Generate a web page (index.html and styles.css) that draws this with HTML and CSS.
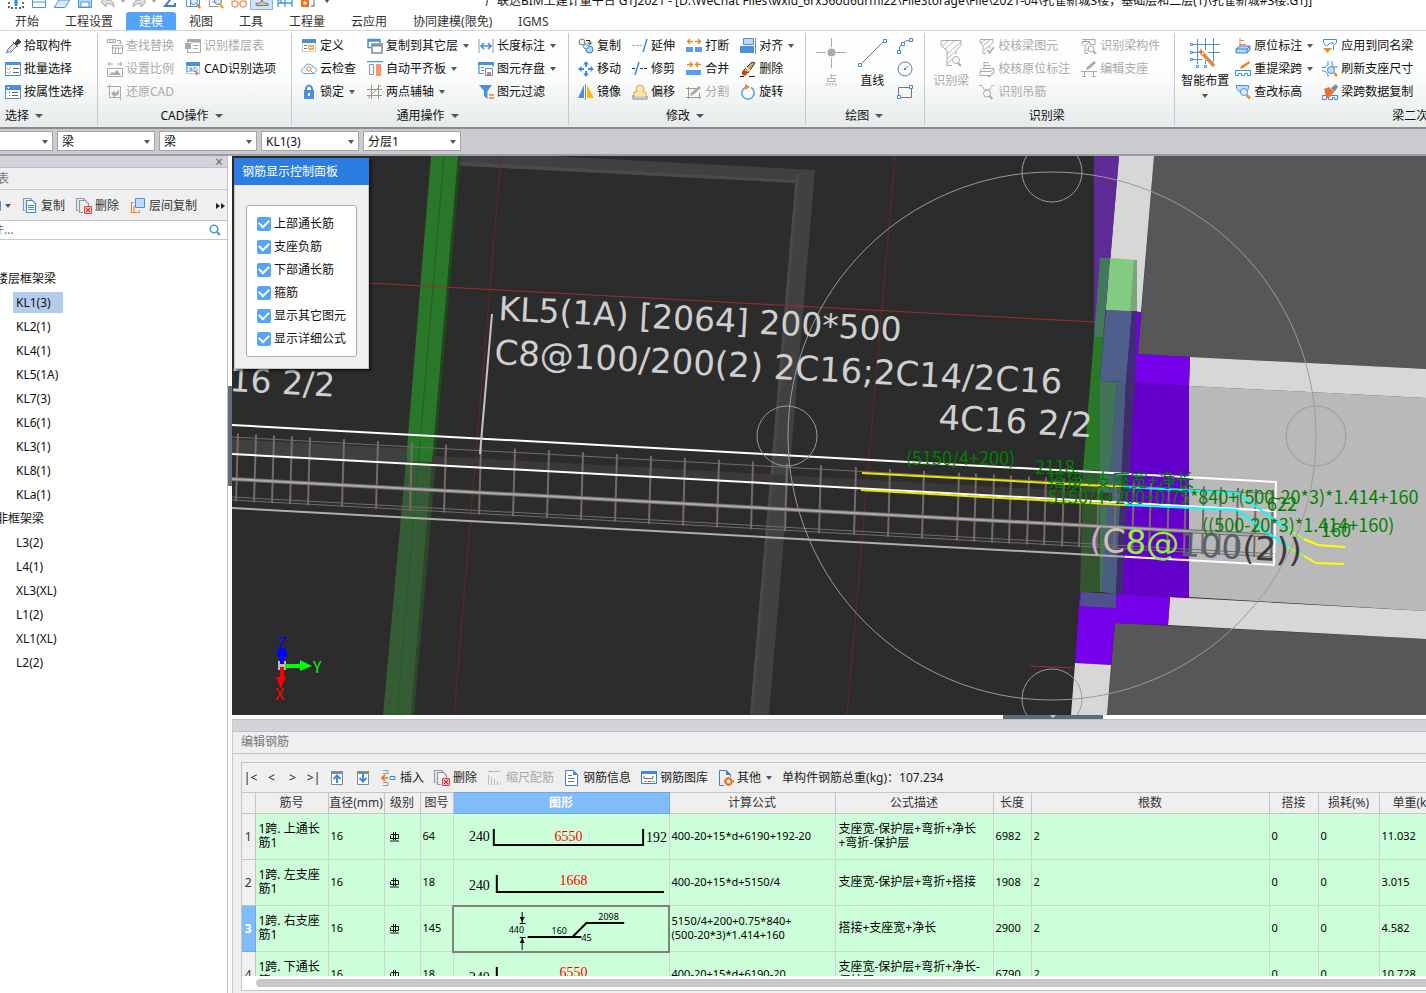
FILE: index.html
```html
<!DOCTYPE html>
<html lang="zh-CN">
<head>
<meta charset="utf-8">
<title>广联达BIM土建计量平台 GTJ2021</title>
<link rel="stylesheet" href="styles.css">
</head>
<body>
<svg class="sprite" aria-hidden="true">
  <defs>
    <symbol id="i-dropper" viewBox="0 0 16 16"><path d="M2 14l1-3 6-6 3 3-6 6z" fill="#dfe5ea" stroke="#6b7a88"/><path d="M8 4l5 5M10 5l3-4 3 3-4 3z" fill="#444" stroke="#444"/><path d="M1 15l2-1" stroke="#4a90e2"/></symbol>
    <symbol id="i-batch" viewBox="0 0 16 16"><path d="M.5 1.500h15v13h-15z" fill="#fff" stroke="#4a90dd"/><path d="M0 1h16v3H0z" fill="#4a90dd"/><path d="M2 7l1.500 1.500L6 6M2 11l1.500 1.500L6 10" fill="none" stroke="#f0903a"/><path d="M8 7.500h6M8 11.500h6" stroke="#666"/></symbol>
    <symbol id="i-attr" viewBox="0 0 16 16"><path d="M.5 1.500h15v13h-15z" fill="#fff" stroke="#4a90dd"/><path d="M0 1h16v5H0z" fill="#4a90dd"/><path d="M2 3h3L3.500 5z" fill="#fff"/><path d="M4 8.500h1M4 11.500h1M7 8.500h6M7 11.500h6" stroke="#666"/></symbol>
    <symbol id="i-find" viewBox="0 0 16 16"><path d="M.5 1.500h8v3h-8zM3 1.500v3M6 1.500v3M5.500 7.500h10v8h-10zM5.500 10h10M8.500 10v5M11.500 10v5" fill="none" stroke="#aaa"/><path d="M10 2.500h3.500V6M12 4.500L13.500 6 15 4.500" fill="none" stroke="#aaa"/></symbol>
    <symbol id="i-scale" viewBox="0 0 16 16"><path d="M1 3h5M10 3h5M3 1L1 3l2 2M13 1l2 2-2 2M.5 7.500h15v8H.500z" fill="none" stroke="#aaa"/><path d="M2 14l3-3 2 1 3-3 4 5z" fill="#aaa"/></symbol>
    <symbol id="i-restore" viewBox="0 0 16 16"><path d="M2.500.5v13M0 2.500h13.500v11H2.500M13.500 13.500V16" fill="none" stroke="#aaa"/><path d="M4 9l4-2v2q3-1 3-4 3 6-3 7v2z" fill="#aaa"/></symbol>
    <symbol id="i-floor" viewBox="0 0 16 16"><path d="M2.500 1.500h13v13h-13zM6 4h9" fill="none" stroke="#aaa"/><path d="M0 5h6v6H0zM3 1h12v3H3z" fill="#aaa"/><path d="M8 7.500h5M8 10.500h5" stroke="#aaa"/></symbol>
    <symbol id="i-cad" viewBox="0 0 16 16"><path d="M1.500 1.500h13v11h-13z" fill="#fff" stroke="#a9c9ee"/><path d="M1 1h14v4H1z" fill="#4a90dd"/><path d="M3.500 6.500H2v4h1.500M5 11V8l1-1.500L7 8v3M5 9h2M9 6.500v4h2l1-1V7.500l-1-1z" fill="none" stroke="#5a9ae2"/><path d="M10 9l5 4-2.500.2L11 15z" fill="#f07848"/></symbol>
    <symbol id="i-define" viewBox="0 0 16 16"><path d="M1.500 1.500h13v12h-13z" fill="#fff" stroke="#c7ccd2"/><path d="M1 1h14v4H1z" fill="#4a90dd"/><path d="M3 7.500h3M3 10.500h3" stroke="#777"/><path d="M7 7h6v5H7z" fill="#f5b04f"/><path d="M8 9.500h4" stroke="#fff"/></symbol>
    <symbol id="i-cloud" viewBox="0 0 16 16"><path d="M4 12.500C-1 12.500 0 7 3.500 7 4 2 11 2 11.500 6c5-.5 5 6.500.5 6.500z" fill="#fff" stroke="#58a0e8"/><circle cx="8" cy="8" r="2.300" fill="none" stroke="#f08030"/><path d="M9.700 9.700L12 12" stroke="#f08030"/></symbol>
    <symbol id="i-lock" viewBox="0 0 16 16"><path d="M5 7V4q3-5 6 0v3" fill="none" stroke="#4a90dd" stroke-width="2"/><path d="M3 6h10v9H3z" fill="#4a90dd"/><path d="M8 9v3" stroke="#fff" stroke-width="2"/></symbol>
    <symbol id="i-copyto" viewBox="0 0 16 16"><path d="M4 9.500H1V1.500h12V5M1 3h12" fill="none" stroke="#4a90dd" stroke-width="1.500"/><path d="M5 6h10v9H5z" fill="#fff" stroke="#7d8b97" stroke-width="1.500"/><path d="M5 7.500h10" stroke="#7d8b97" stroke-width="2"/></symbol>
    <symbol id="i-align" viewBox="0 0 16 16"><path d="M0 .5h16" stroke="#4a90dd" stroke-width="1.500"/><path d="M2.500 3.500h4v10h-4z" fill="#fff" stroke="#8d98a2"/><path d="M9 3h5v12H9z" fill="#ff9468"/></symbol>
    <symbol id="i-axis" viewBox="0 0 16 16"><path d="M4.500 1v14M11.500 1v14M0 5.500h15M0 11.500h15" stroke="#8d98a2"/><path d="M1 14L14 1" stroke="#f08030"/></symbol>
    <symbol id="i-length" viewBox="0 0 16 16"><path d="M1 1v14M15 1v14" stroke="#8d98a2"/><path d="M3 8h10M6 5L3 8l3 3M10 5l3 3-3 3" fill="none" stroke="#3f8ae0" stroke-width="1.500"/></symbol>
    <symbol id="i-save" viewBox="0 0 16 16"><path d="M6 12.500H1V2h14v4" fill="none" stroke="#4a90dd" stroke-width="1.200"/><path d="M0 1h16v3H0z" fill="#4a90dd"/><path d="M3 6.500h3M3 9.500h3" stroke="#888"/><path d="M7.500 7.500h7v7h-7z" fill="#fff" stroke="#4a90dd"/><path d="M9 11h4v3H9z" fill="#f08030"/></symbol>
    <symbol id="i-filter" viewBox="0 0 16 16"><path d="M1 1h13L9.500 7v8L6 12V7z" fill="#4a90dd"/><path d="M11 11h5M11 14h5" stroke="#f08030" stroke-width="1.500"/></symbol>
    <symbol id="i-copy2" viewBox="0 0 16 16"><circle cx="4" cy="4" r="3" fill="#eee" stroke="#777"/><path d="M8 2.500h4V6M10 4.500l2 2 2-2" fill="none" stroke="#222"/><circle cx="11.500" cy="11.500" r="3.500" fill="#a9dcf5" stroke="#2878b8"/><circle cx="8" cy="8.500" r="2.500" fill="#cdeafa" stroke="#4a90c0"/></symbol>
    <symbol id="i-move" viewBox="0 0 16 16"><path d="M8 0l3 3.500H5zM8 16l3-3.500H5zM0 8l3.500-3v6zM16 8l-3.500-3v6z" fill="#3f8ae0"/><path d="M8 3v3M8 10v3M3 8h3M10 8h3" stroke="#3f8ae0" stroke-width="2"/></symbol>
    <symbol id="i-mirror" viewBox="0 0 16 16"><path d="M6 1v13H0z" fill="#4a90dd"/><path d="M9 1v13h7z" fill="#ffb417"/><path d="M7.500 0v16" stroke="#888"/></symbol>
    <symbol id="i-extend" viewBox="0 0 16 16"><path d="M0 7.500h10" stroke="#aaa" stroke-dasharray="3 1"/><path d="M15 1l-4 13" stroke="#3f8ae0" stroke-width="1.500"/></symbol>
    <symbol id="i-trim" viewBox="0 0 16 16"><path d="M0 7.500h4M8 7.500h8" stroke="#333" stroke-dasharray="3 1"/><path d="M7 1L3 14" stroke="#3f8ae0" stroke-width="1.500"/></symbol>
    <symbol id="i-offset" viewBox="0 0 16 16"><path d="M5 8q-3-6 3-7 6 1 3 7h3v5H2V8z" fill="#ffe6b0" stroke="#f0a030"/><path d="M1 11v4h14v-3" fill="none" stroke="#3f8ae0"/></symbol>
    <symbol id="i-break" viewBox="0 0 16 16"><path d="M0 9h7v5H0zM9 9h7v5H9z" fill="#5a9df0"/><path d="M7 3.500H2M9 3.500h5M4 1L1.500 3.500 4 6M12 1l2.500 2.500L12 6" fill="none" stroke="#e58a1c" stroke-width="1.300"/></symbol>
    <symbol id="i-merge" viewBox="0 0 16 16"><path d="M0 9h15v5H0z" fill="#5a9df0"/><path d="M1 3.500h5M15 3.500h-5M4 1l2.500 2.500L4 6M12 1L9.500 3.500 12 6" fill="none" stroke="#e58a1c" stroke-width="1.300"/></symbol>
    <symbol id="i-split" viewBox="0 0 16 16"><path d="M0 4.500h12M0 13.500h15M2.500 3v12M13.500 9v6" stroke="#999"/><path d="M4 12l1-3 8-7 2 2-8 7z" fill="#aaa"/></symbol>
    <symbol id="i-alignr" viewBox="0 0 16 16"><path d="M3.500.5h10v6h-10z" fill="#b8d9fb" stroke="#4a90dd"/><path d="M0 8h14v7H0z" fill="#4a90dd"/><path d="M15.500 0v16" stroke="#888"/></symbol>
    <symbol id="i-erase" viewBox="0 0 16 16"><path d="M3 10l9-9 3 1-7 10z" fill="#d9a25c" stroke="#333"/><path d="M6 6.500l4 3.500" stroke="#f4e4c0" stroke-width="2"/><circle cx="4.500" cy="12" r="2.600" fill="#d8410e"/><path d="M0 15.500h4M9 15.500h6" stroke="#222"/></symbol>
    <symbol id="i-rotate" viewBox="0 0 16 16"><path d="M11 3.500A6.200 6.200 0 1 1 5 3.500" fill="none" stroke="#58a0e8" stroke-width="1.500"/><path d="M5 0l5 3-5 3z" fill="#f08a20"/></symbol>
    <symbol id="i-point" viewBox="0 0 30 30"><path d="M15.500 0v9M15.500 20v10M0 14.500h10M20 14.500h10" stroke="#aaa"/><circle cx="15.500" cy="14.500" r="4" fill="#aaa"/></symbol>
    <symbol id="i-line" viewBox="0 0 30 30"><path d="M3 27L27 3" stroke="#777"/><path d="M1.500 25.500h3v3h-3zM26.500 1.500h3v3h-3z" fill="#fff" stroke="#3f8ae0"/></symbol>
    <symbol id="i-arc" viewBox="0 0 16 16"><path d="M2 14Q2 3 14 2" fill="none" stroke="#777"/><path d="M.5 12.500h3v3h-3zM4.500 4.500h3v3h-3zM12.500.5h3v3h-3z" fill="#fff" stroke="#3f8ae0"/></symbol>
    <symbol id="i-circle" viewBox="0 0 16 16"><circle cx="8" cy="8" r="7" fill="none" stroke="#777"/><path d="M8 8l3-3" stroke="#3f8ae0"/><path d="M7 7h2v2H7z" fill="#3f8ae0"/></symbol>
    <symbol id="i-rect" viewBox="0 0 16 16"><path d="M1.500 3.500h13v10h-13z" fill="none" stroke="#777"/><path d="M.5 11.500h3v3h-3zM12.500 1.500h3v3h-3z" fill="#fff" stroke="#3f8ae0"/></symbol>
    <symbol id="i-beamid" viewBox="0 0 30 30"><path d="M5 2.500h20v5l-5 5v4M5 2.500v5l6 5v15h5" fill="none" stroke="#aaa"/><path d="M6 8l6-5M9 11l9-8M11 16L25 4M11 21l8-7M11 26l5-5" stroke="#bbb"/><circle cx="20" cy="22" r="3.500" fill="none" stroke="#aaa"/><path d="M22 25l3 3" stroke="#aaa" stroke-width="2"/></symbol>
    <symbol id="i-chk1" viewBox="0 0 16 16"><path d="M1 1.500h13v3l-3 3v3M1 1.500v3l3 3v8h3M2 5l4-3M5 7l6-5M5 12l5-4" fill="none" stroke="#aaa"/><path d="M8 12l2.500 3L15 9" fill="none" stroke="#aaa" stroke-width="1.500"/></symbol>
    <symbol id="i-chk2" viewBox="0 0 16 16"><path d="M5 7V1M5 1.500h5M5 4.500h7M1 9.500l3-2h11l-3 3H1v4h11l3-3v-3" fill="none" stroke="#aaa"/><path d="M8 14l2 2 5-5" fill="none" stroke="#aaa"/></symbol>
    <symbol id="i-hang" viewBox="0 0 16 16"><path d="M0 1.500h3l2 4h6l2-4h3" fill="none" stroke="#aaa" stroke-dasharray="3 1"/><circle cx="8" cy="9.500" r="3.500" fill="none" stroke="#aaa"/><path d="M10.500 12l3 3" stroke="#aaa" stroke-width="2"/></symbol>
    <symbol id="i-comp" viewBox="0 0 16 16"><path d="M1 1.500h13v5H9v-3H1v2l3 3v7h3M2 5l3-3M4 8l5-5M5 13l3-3" fill="none" stroke="#aaa"/><circle cx="10" cy="11" r="3" fill="none" stroke="#aaa"/><path d="M12 13l3 3" stroke="#aaa" stroke-width="2"/></symbol>
    <symbol id="i-editsup" viewBox="0 0 16 16"><path d="M0 10.500h16M3.500 11v4M12.500 11v4M1 15.500h4M11 15.500h4" stroke="#aaa"/><path d="M5 9l1-3 7-6 2 2-7 6z" fill="#aaa"/></symbol>
    <symbol id="i-smart" viewBox="0 0 30 30"><path d="M7.500 1v25M15.500 0v12M23.500 0v24M3 6.500h27M3 14.500h8M18 14.500h12M3 21.500h9M15.500 22v4" stroke="#4a90dd"/><path d="M.5 5.500h2v2h-2zM.5 13.500h2v2h-2zM.5 20.500h2v2h-2zM6.500 27.500h2v2h-2zM14.500 27.500h2v2h-2z" fill="#fff" stroke="#4a90dd"/><path d="M13 16l11 12" stroke="#d98a45" stroke-width="3.500"/><path d="M11 10l1 3 3 1-3 1-1 3-1-3-3-1 3-1z" fill="#f07020"/></symbol>
    <symbol id="i-orig" viewBox="0 0 16 16"><path d="M5 9V0M5 2.500h4M5 6.500h6" stroke="#f08030"/><path d="M1 11l4-3h10v4l-3 3H1z" fill="#b8d6fa" stroke="#3f7fd0"/><path d="M1 11h11l3-3M12 11v4" fill="none" stroke="#3f7fd0"/></symbol>
    <symbol id="i-respan" viewBox="0 0 16 16"><path d="M.5 9.500h15v5h-3v-2h-3v2h-3v-2h-3v2h-3z" fill="none" stroke="#3f8ae0"/><path d="M5 8l1-3 8-5 1 2-7 5z" fill="#f08030"/></symbol>
    <symbol id="i-elev" viewBox="0 0 16 16"><path d="M1.500 1.500h12v3l-2 3H4l-2.500-3z" fill="#c7dcf8" stroke="#4a90dd"/><circle cx="9" cy="8" r="3.500" fill="#e0edfc" stroke="#4a90dd"/><path d="M11.500 11l3.500 3.500" stroke="#f09020" stroke-width="2.500"/></symbol>
    <symbol id="i-apply" viewBox="0 0 16 16"><path d="M4 8L1.500 4.500v-3h13v3L11.500 8v4M5 8l3-3h4" fill="none" stroke="#3f8ae0"/><path d="M1 10h9l-4.500 5z" fill="#f0901c"/></symbol>
    <symbol id="i-refresh" viewBox="0 0 16 16"><path d="M6 0v4L3 6.500H0M10 0v4l2 2h4M0 10h3l3 3v3" fill="none" stroke="#3f8ae0"/><circle cx="9" cy="9" r="3.500" fill="#c7dcf8" stroke="#4a90dd"/><path d="M12 12l3 3" stroke="#f09020" stroke-width="2.500"/></symbol>
    <symbol id="i-spancopy" viewBox="0 0 16 16"><path d="M.5 15.500v-4h15v4h-3v-2h-2v2h-4v-2h-2v2z" fill="none" stroke="#3f8ae0"/><path d="M2 5l5-2 5 5-5 6-3-1z" fill="#f07030"/><path d="M9 4l5-4 2 3-4 5z" fill="#7d8b97"/></symbol>
    <symbol id="i-pages" viewBox="0 0 16 16"><path d="M3 12.500H1.500V.5h7L10 2" fill="none" stroke="#8d98a2" stroke-width="1.200"/><path d="M4.500 2.500h6l3 3v9h-9z" fill="#fff" stroke="#3f8ae0" stroke-width="1.200"/><path d="M6 7.500h6M6 9.500h6M6 11.500h6" stroke="#3f8ae0"/></symbol>
    <symbol id="i-delpage" viewBox="0 0 16 16"><path d="M2 12.500H.500V.5h7L9 2M7 14.500H3.500v-12h6l3 3V8" fill="none" stroke="#8d98a2" stroke-width="1.200"/><path d="M8.500 8.500h7v7h-7z" fill="#f3b0b0" stroke="#d84a4a"/><path d="M10 10l4 4M14 10l-4 4" stroke="#c22"/></symbol>
    <symbol id="i-layers" viewBox="0 0 16 16"><path d="M4 4.500H1.500v10M4 7.500v7M1 14.500h8.500V12" fill="none" stroke="#f08030"/><path d="M5.500.5h9v9h-9z" fill="#c0dbfb" stroke="#4a90dd"/></symbol>
    <symbol id="i-glass" viewBox="0 0 16 16"><circle cx="7" cy="7" r="3.800" fill="none" stroke="#4a9cc8" stroke-width="1.600"/><path d="M10 10l3 3" stroke="#4a9cc8" stroke-width="2.200"/></symbol>
    <symbol id="i-up" viewBox="0 0 16 16"><path d="M2.500 1.500h11v13h-11z" fill="#fff" stroke="#7d8b97"/><path d="M2 1h12v3H2z" fill="#7d8b97"/><path d="M8 13V6M4.500 9L8 5.500 11.500 9" fill="none" stroke="#3f8ae0" stroke-width="2"/></symbol>
    <symbol id="i-down" viewBox="0 0 16 16"><path d="M2.500 1.500h11v13h-11z" fill="#fff" stroke="#7d8b97"/><path d="M2 1h12v3H2z" fill="#7d8b97"/><path d="M8 4v7M4.500 8L8 11.500 11.500 8" fill="none" stroke="#3f8ae0" stroke-width="2"/></symbol>
    <symbol id="i-insert" viewBox="0 0 16 16"><path d="M2 .5h5v3H2M2 12.500h5v3H2" fill="none" stroke="#8d98a2"/><path d="M7 8H2M4 5L1 8l3 3" fill="none" stroke="#f07020" stroke-width="1.600"/><path d="M9 6.500h5v3H9z" fill="none" stroke="#3f8ae0"/></symbol>
    <symbol id="i-ruler" viewBox="0 0 16 16"><path d="M1.500 5v10M4.500 7v8M7.500 9v6M10.500 11v4M13.500 13v2M1 1.500h12M3 .5v2M9 .5l2 1.500" stroke="#bbb" fill="none"/></symbol>
    <symbol id="i-info" viewBox="0 0 16 16"><path d="M1.500.5h8l4 4v11h-12z" fill="#fff" stroke="#3f7fd0"/><path d="M9 1v4h4.500z" fill="#3f7fd0"/><path d="M4 5.500h4M4 8.500h7M4 11.500h6" stroke="#6b7a88"/></symbol>
    <symbol id="i-lib" viewBox="0 0 16 16"><path d="M.5 1.500h15v12H.500z" fill="#fff" stroke="#3f7fd0"/><path d="M0 1h16v3H0z" fill="#3f8ae0"/><path d="M3 8V6M3 8.500h9M12 6v2" stroke="#666"/><path d="M3 11.500h3" stroke="#f08030"/><path d="M7 11.500h3" stroke="#e04a4a"/><path d="M11 11.500h3" stroke="#58b858"/></symbol>
    <symbol id="i-other" viewBox="0 0 16 16"><path d="M6 15.500H1.500V.5h7l4 4V7" fill="none" stroke="#3f7fd0"/><path d="M8 0v5h5z" fill="#3f7fd0"/><circle cx="10.500" cy="11.500" r="3" fill="#fff" stroke="#f07020" stroke-width="2"/><path d="M10.500 7v2M10.500 14v2M6 11.500h2M13 11.500h3" stroke="#f07020" stroke-width="2"/></symbol>
    <symbol id="i-rebar" viewBox="0 0 10 10"><path d="M3.500 0v8M5.500 0v8M1 2.500h7.500v4H.500v-3M0 9h9" fill="none" stroke="#111"/></symbol>
    <symbol id="q-sel" viewBox="0 0 16 16"><path d="M1 15V1h14v14z" fill="none" stroke="#333" stroke-width="1.500" stroke-dasharray="2 2"/><path d="M8 7v6" stroke="#3f8ae0" stroke-width="3"/></symbol>
    <symbol id="q-new" viewBox="0 0 16 16"><path d="M1.500 1v13.500h13V1M1 9h14" fill="none" stroke="#4a90dd"/></symbol>
    <symbol id="q-open" viewBox="0 0 16 16"><path d="M0 14.500L5 7h11l-5 7.500z" fill="#dcebfb" stroke="#4a90dd"/></symbol>
    <symbol id="q-save" viewBox="0 0 16 16"><path d="M1.500 1v13.500h13V1" fill="#b9d8fa" stroke="#4a90dd"/><path d="M4 9h8v5H4z" fill="#fff" stroke="#4a90dd"/></symbol>
    <symbol id="q-undo" viewBox="0 0 16 16"><path d="M1 9l5-5v3q8-1 8 7-2-4-8-3v3z" fill="#ddd" stroke="#aaa"/></symbol>
    <symbol id="q-redo" viewBox="0 0 16 16"><path d="M15 9l-5-5v3q-8-1-8 7 2-4 8-3v3z" fill="#ddd" stroke="#aaa"/></symbol>
    <symbol id="q-sum" viewBox="0 0 16 16"><path d="M13 4V1H3l5 6-5 6h10v-3" fill="none" stroke="#3f7fd0" stroke-width="2"/></symbol>
    <symbol id="q-view" viewBox="0 0 16 16"><path d="M1.500 1v12.500h13V1M1 6h14M5.500 1v12" fill="none" stroke="#4a90dd"/><circle cx="9" cy="8" r="3.500" fill="#dcebfb" stroke="#4a90dd"/><path d="M12 11l3 4" stroke="#f08030" stroke-width="2.500"/></symbol>
    <symbol id="q-rep" viewBox="0 0 16 16"><path d="M1.500 1v12.500h9M4 6h4M4 9h3" fill="none" stroke="#8d98a2"/><circle cx="10" cy="8" r="3.500" fill="#dcebfb" stroke="#6b7a88"/><path d="M12 11l3 4" stroke="#f0a020" stroke-width="2.500"/></symbol>
    <symbol id="q-glasses" viewBox="0 0 16 16"><circle cx="4" cy="11" r="3" fill="none" stroke="#f0a078" stroke-width="1.500"/><circle cx="12" cy="11" r="3" fill="none" stroke="#f0a078" stroke-width="1.500"/><path d="M7 10h2M1 9V5M15 9V5" stroke="#f0a078"/></symbol>
    <symbol id="q-stamp" viewBox="0 0 16 16"><path d="M8 2v6M2 12.500h12v-2q-6 0-6-4 0 4-6 4z" fill="#f0c090" stroke="#6b7a88"/></symbol>
    <symbol id="q-grid" viewBox="0 0 16 16"><path d="M1 14V8l4-4M8 14V4M15 14V4M1 10h14M4 6h12M4 1v9" fill="none" stroke="#4a90dd" stroke-width="1.300"/></symbol>
    <symbol id="q-add" viewBox="0 0 16 16"><path d="M1 6h8v8H1z" fill="#f07020"/><path d="M5 8v4M3 10h4" stroke="#fff"/><path d="M9 1h5v12h-3" fill="none" stroke="#7d8b97" stroke-width="1.300"/></symbol>
  </defs>
</svg>

<header class="titlebar">
  <div class="quick">
    <button class="qb" aria-label="选择"><svg><use href="#q-sel"/></svg></button>
    <button class="qb" aria-label="新建"><svg><use href="#q-new"/></svg></button>
    <button class="qb" aria-label="打开"><svg><use href="#q-open"/></svg></button>
    <button class="qb" aria-label="保存"><svg><use href="#q-save"/></svg></button>
    <button class="qb" aria-label="撤销"><svg><use href="#q-undo"/></svg></button>
    <button class="qd" aria-label="撤销列表"><i class="caret pale"></i></button>
    <button class="qb" aria-label="恢复"><svg><use href="#q-redo"/></svg></button>
    <button class="qd" aria-label="恢复列表"><i class="caret pale"></i></button>
    <button class="qb" aria-label="汇总"><svg><use href="#q-sum"/></svg></button>
    <button class="qb" aria-label="查看"><svg><use href="#q-view"/></svg></button>
    <button class="qb" aria-label="报表"><svg><use href="#q-rep"/></svg></button>
    <button class="qb" aria-label="检查"><svg><use href="#q-glasses"/></svg></button>
    <button class="qb on" aria-label="标注"><svg><use href="#q-stamp"/></svg></button>
    <button class="qb" aria-label="轴网"><svg><use href="#q-grid"/></svg></button>
    <button class="qb" aria-label="添加"><svg><use href="#q-add"/></svg></button>
    <button class="qd" aria-label="更多"><i class="caret"></i></button>
  </div>
  <div class="title">广联达BIM土建计量平台 GTJ2021 - [D:\WeChat Files\wxid_6rx56ou6urmi22\FileStorage\File\2021-04\孔雀新城3楼，基础层和二层(1)\孔雀新城#3楼.GTJ]</div>
</header>

<nav class="tabs">
  <button>开始</button><button>工程设置</button><button class="active">建模</button><button>视图</button><button>工具</button><button>工程量</button><button>云应用</button><button>协同建模(限免)</button><button>IGMS</button>
</nav>

<section class="ribbon">
  <div class="group first">
    <div class="cols">
      <div class="col">
        <button><svg><use href="#i-dropper"/></svg>拾取构件</button>
        <button><svg><use href="#i-batch"/></svg>批量选择</button>
        <button><svg><use href="#i-attr"/></svg>按属性选择</button>
      </div>
    </div>
    <div class="glabel">选择<i class="caret big"></i></div>
  </div>
  <div class="group cad">
    <div class="cols">
      <div class="col">
        <button disabled><svg><use href="#i-find"/></svg>查找替换</button>
        <button disabled><svg><use href="#i-scale"/></svg>设置比例</button>
        <button disabled><svg><use href="#i-restore"/></svg>还原CAD</button>
      </div>
      <div class="col">
        <button disabled><svg><use href="#i-floor"/></svg>识别楼层表</button>
        <button><svg><use href="#i-cad"/></svg>CAD识别选项</button>
      </div>
    </div>
    <div class="glabel">CAD操作<i class="caret big"></i></div>
  </div>
  <div class="group common">
    <div class="cols">
      <div class="col">
        <button><svg><use href="#i-define"/></svg>定义</button>
        <button><svg><use href="#i-cloud"/></svg>云检查</button>
        <button><svg><use href="#i-lock"/></svg>锁定<i class="caret"></i></button>
      </div>
      <div class="col">
        <button><svg><use href="#i-copyto"/></svg>复制到其它层<i class="caret"></i></button>
        <button><svg><use href="#i-align"/></svg>自动平齐板<i class="caret"></i></button>
        <button><svg><use href="#i-axis"/></svg>两点辅轴<i class="caret"></i></button>
      </div>
      <div class="col">
        <button><svg><use href="#i-length"/></svg>长度标注<i class="caret"></i></button>
        <button><svg><use href="#i-save"/></svg>图元存盘<i class="caret"></i></button>
        <button><svg><use href="#i-filter"/></svg>图元过滤</button>
      </div>
    </div>
    <div class="glabel">通用操作<i class="caret big"></i></div>
  </div>
  <div class="group">
    <div class="cols">
      <div class="col">
        <button><svg><use href="#i-copy2"/></svg>复制</button>
        <button><svg><use href="#i-move"/></svg>移动</button>
        <button><svg><use href="#i-mirror"/></svg>镜像</button>
      </div>
      <div class="col">
        <button><svg><use href="#i-extend"/></svg>延伸</button>
        <button><svg><use href="#i-trim"/></svg>修剪</button>
        <button><svg><use href="#i-offset"/></svg>偏移</button>
      </div>
      <div class="col">
        <button><svg><use href="#i-break"/></svg>打断</button>
        <button><svg><use href="#i-merge"/></svg>合并</button>
        <button disabled><svg><use href="#i-split"/></svg>分割</button>
      </div>
      <div class="col">
        <button><svg><use href="#i-alignr"/></svg>对齐<i class="caret"></i></button>
        <button><svg><use href="#i-erase"/></svg>删除</button>
        <button><svg><use href="#i-rotate"/></svg>旋转</button>
      </div>
    </div>
    <div class="glabel">修改<i class="caret big"></i></div>
  </div>
  <div class="group draw">
    <div class="cols">
      <button class="tall" disabled><svg><use href="#i-point"/></svg>点</button>
      <button class="tall"><svg><use href="#i-line"/></svg>直线</button>
      <div class="col">
        <button aria-label="弧"><svg><use href="#i-arc"/></svg></button>
        <button aria-label="圆"><svg><use href="#i-circle"/></svg></button>
        <button aria-label="矩形"><svg><use href="#i-rect"/></svg></button>
      </div>
    </div>
    <div class="glabel">绘图<i class="caret big"></i></div>
  </div>
  <div class="group recog">
    <div class="cols">
      <button class="tall" disabled><svg><use href="#i-beamid"/></svg>识别梁</button>
      <div class="col">
        <button disabled><svg><use href="#i-chk1"/></svg>校核梁图元</button>
        <button disabled><svg><use href="#i-chk2"/></svg>校核原位标注</button>
        <button disabled><svg><use href="#i-hang"/></svg>识别吊筋</button>
      </div>
      <div class="col">
        <button disabled><svg><use href="#i-comp"/></svg>识别梁构件</button>
        <button disabled><svg><use href="#i-editsup"/></svg>编辑支座</button>
      </div>
    </div>
    <div class="glabel">识别梁</div>
  </div>
  <div class="group last">
    <div class="cols">
      <button class="tall"><svg><use href="#i-smart"/></svg>智能布置<i class="caret"></i></button>
      <div class="col">
        <button><svg><use href="#i-orig"/></svg>原位标注<i class="caret"></i></button>
        <button><svg><use href="#i-respan"/></svg>重提梁跨<i class="caret"></i></button>
        <button><svg><use href="#i-elev"/></svg>查改标高</button>
      </div>
      <div class="col">
        <button><svg><use href="#i-apply"/></svg>应用到同名梁</button>
        <button><svg><use href="#i-refresh"/></svg>刷新支座尺寸</button>
        <button><svg><use href="#i-spancopy"/></svg>梁跨数据复制</button>
      </div>
    </div>
    <div class="glabel">梁二次编辑</div>
  </div>
</section>

<div class="selectors">
  <label class="combo cut"><select aria-label="楼层"><option></option></select><i class="caret"></i></label>
  <label class="combo"><select aria-label="构件大类"><option>梁</option></select><i class="caret"></i></label>
  <label class="combo"><select aria-label="构件类型"><option>梁</option></select><i class="caret"></i></label>
  <label class="combo"><select aria-label="构件"><option>KL1(3)</option></select><i class="caret"></i></label>
  <label class="combo"><select aria-label="分层"><option>分层1</option></select><i class="caret"></i></label>
</div>

<main class="work">
  <aside class="side">
    <div class="strip"><button aria-label="关闭">×</button></div>
    <div class="side-title">表</div>
    <div class="side-tools">
      <button class="newbtn" aria-label="新建"><b></b><i class="caret"></i></button>
      <button><svg><use href="#i-pages"/></svg>复制</button>
      <button><svg><use href="#i-delpage"/></svg>删除</button>
      <button><svg><use href="#i-layers"/></svg>层间复制</button>
      <button class="more" aria-label="更多"><i></i><i></i></button>
    </div>
    <div class="search"><input type="text" placeholder="件..." aria-label="搜索构件"><svg><use href="#i-glass"/></svg></div>
    <ul class="tree">
      <li class="head cutword">楼层框架梁</li>
      <li><span class="sel">KL1(3)</span></li>
      <li><span>KL2(1)</span></li>
      <li><span>KL4(1)</span></li>
      <li><span>KL5(1A)</span></li>
      <li><span>KL7(3)</span></li>
      <li><span>KL6(1)</span></li>
      <li><span>KL3(1)</span></li>
      <li><span>KL8(1)</span></li>
      <li><span>KLa(1)</span></li>
      <li class="head cutword">非框架梁</li>
      <li><span>L3(2)</span></li>
      <li><span>L4(1)</span></li>
      <li><span>XL3(XL)</span></li>
      <li><span>L1(2)</span></li>
      <li><span>XL1(XL)</span></li>
      <li><span>L2(2)</span></li>
    </ul>
  </aside>
  <div class="vsplit"><i></i></div>

  <section class="right">
    <div class="viewport">
      <svg class="scene" viewBox="232 156 1194 559" preserveAspectRatio="xMinYMin slice">
        <rect x="232" y="156" width="1194" height="559" fill="#2c2c2c"/>
        <!-- frame behind -->
        <path d="M445 156h105l265 14-1 13-18 0-351-18z" fill="#404040"/>
        <path d="M445 161l351 19v3l-351-18z" fill="#4a4a4a"/>
        <path d="M796 174l19-4-46 545h-19z" fill="#414141"/>
        <path d="M796 174h3l-46 541h-3z" fill="#494949"/>
        <!-- slabs and walls on the right -->
        <path d="M1154 156h272v213l-236-12-52-3z" fill="#575757"/>
        <path d="M1115 623l311 16v76h-319z" fill="#575757"/>
        <path d="M1189 386l237 12v213l-237-14z" fill="#b9b9b9"/>
        <path d="M1190 357l236 12v29l-237-12zM1170 597l256 14v28l-258-14z" fill="#d7d7d7"/>
        <path d="M1119 156h35l-13 156-35-2z" fill="#d7d7d7"/>
        <path d="M1094 156h25l-13 154-12 30z" fill="#5f2b96"/>
        <path d="M1106 310l35 2-3 42 52 3-1 29-54-4z" fill="#7600ea"/>
        <path d="M1135 382l54 4v212l-73-4z" fill="#6500cc"/>
        <path d="M1080 592l90 5-2 28-53-2-4 42-36-2z" fill="#7600ea"/>
        <path d="M1075 663l36 2-4 50h-36z" fill="#d7d7d7"/>
        <!-- translucent column -->
        <path d="M1110 258l27 2-4 51-27-1z" fill="#82cc82"/>
        <path d="M1137 260l-3 0-4 51h7z" fill="#78a878"/>
        <path d="M1100 258h10l-7 79h-9z" fill="#44785c"/>
        <path d="M1094 337h9l-3 44v89h-17z" fill="#2a782a"/>
        <path d="M1083 470h17v122h-20z" fill="#34552f"/>
        <path d="M1106 310l26 1-6 71-26-1z" fill="#4e5f8c"/>
        <path d="M1103 337l3-27-6 71z" fill="#44785c"/>
        <path d="M1132 311h5l-2 71-9 0z" fill="#42297a"/>
        <path d="M1100 381l17 1-15 210h-2z" fill="#427558"/>
        <path d="M1117 382h9l-10 212-15-2z" fill="#4a5f80"/>
        <path d="M1126 382h9l-13 212h-6z" fill="#3e2c6c"/>
        <path d="M1081 592l35 2v14l-36-2z" fill="#4d528a"/>
        <!-- left column -->
        <path d="M458 156h3l-27 315-20 244h-4z" fill="#22471f"/>
        <path d="M431 156h27l-26 306-26-1z" fill="#297829"/>
        <path d="M406 461l26 2-21 252h-28z" fill="#355c35"/>
        <path d="M432 463l4 0-22 252h-3z" fill="#2e452e"/>
        <path d="M444 156l-47 559" stroke="#215f21" fill="none"/>
        <!-- grid axes -->
        <path d="M501 156l-47 559M895 156l-48 559" stroke="#6a2828" fill="none"/>
        <path d="M369 283l725 39M1030 666l45 2" stroke="#a02c2c" fill="none"/>
        <!-- beam cage, in the beam's own slope -->
        <g transform="translate(232 425) skewY(3.13)" fill="none">
          <path d="M0 14h175v14H0z" fill="#404040"/>
          <path d="M200 20h680v9H200z" fill="#3b3838"/>
          <g stroke="#766b67">
            <path d="M0 12h1044M0 72h1044M0 75h1044"/>
            <path stroke-width="2" d="M6 8l-2 68M24 8l-2 68M42 8l-2 68M60 8l-2 68M78 8l-2 68M112 8l-2 68M146 8l-2 68M180 8l-2 68M214 8l-2 68M249 8l-2 68M283 8l-2 68M317 8l-2 68M351 8l-2 68M385 8l-2 68M419 8l-2 68M453 8l-2 68M487 8l-2 68M521 8l-2 68M555 8l-2 68M589 8l-2 68M624 8l-2 68M658 8l-2 68M692 8l-2 68M727 8l-2 68M744 8l-2 68M762 8l-2 68M779 8l-2 68M797 8l-2 68M814 8l-2 68M832 8l-2 68M849 8l-2 68M867 8l-2 68M884 8l-2 68M902 8l-2 68M919 8l-2 68M937 8l-2 68M954 8l-2 68M972 8l-2 68M989 8l-2 68M1006 8l-2 68M1024 8l-2 68M1041 8l-2 68"/>
            <path stroke-width="4" d="M0 54h1044"/>
          </g>
          <path d="M0 54h1044" stroke="#aaa" stroke-width="2"/>
          <path d="M0 83h893" stroke="#b0b0b0" stroke-width="2"/>
          <path d="M893 83h149L1044 0H0M0 29h1044" stroke="#fff" stroke-width="2"/>
        </g>
        <path d="M492 314l-12 140" stroke="#c4c4c4" stroke-width="2"/>
        <!-- support bar being edited -->
        <g fill="none" stroke-width="2">
          <path d="M862 473l262 14M861 490l264 15" stroke="#e8e800"/>
          <path d="M1124 487l113 6 51 36M1125 505l112 5 51 37" stroke="#00ffff"/>
          <path d="M1288 529l16 10M1288 547l16 9" stroke="#90ff50"/>
          <path d="M1304 539l14 6 27 2M1304 556l12 7 28 1" stroke="#ffff00"/>
        </g>
        <!-- orbit gizmo -->
        <g fill="none" stroke="#9a9a9a">
          <circle cx="1052" cy="436" r="264"/><circle cx="787" cy="436" r="30"/><circle cx="1316" cy="436" r="30"/><circle cx="1052" cy="172" r="30"/><circle cx="1052" cy="699" r="30"/>
        </g>
        <!-- annotations -->
        <g class="note">
          <text transform="translate(498 320) rotate(3)">KL5(1A) [2064] 200*500</text>
          <text class="wide" transform="translate(494 364) rotate(3)">C8@100/200(2) 2C16;2C14/2C16</text>
          <text class="wide" transform="translate(938 429) rotate(3)">4C16 2/2</text>
          <text transform="translate(229 391) rotate(3)">16 2/2</text>
          <text transform="translate(1089 551) rotate(3)"><tspan fill="#c8a8d8">(</tspan><tspan fill="#cfc0b0">C</tspan><tspan fill="#90f040">8@</tspan><tspan fill="#56636b">100</tspan><tspan fill="#3c3c3c">(2))</tspan></text>
        </g>
        <g class="dim">
          <text x="906" y="465">(5150/4+200)</text>
          <text x="1035" y="474">2118</text>
          <text x="1048" y="487">搭接+支座宽+净长</text>
          <text x="1048" y="504">5150/4+200+0.75*840+(500-20*3)*1.414+160</text>
          <text x="1267" y="511">622</text>
          <text x="1202" y="532">((500-20*3)*1.414+160)</text>
          <text x="1321" y="537">160</text>
        </g>
        <!-- axis tripod -->
        <path d="M278 661h8v9h-8z" fill="#bbb"/>
        <path d="M282 664v-12" stroke="#00f" stroke-width="4"/><circle cx="282" cy="654" r="5" fill="#00f"/>
        <path d="M285 664h15v-4l12 6-12 5v-3h-15z" fill="#0f0"/>
        <path d="M280 667h4v9h2l-5 13-5-12h4z" fill="#f00"/>
        <g class="axis"><text x="277" y="649" fill="#00f">Z</text><text x="313" y="673" fill="#0f0">Y</text><text x="275" y="700" fill="#f00">X</text></g>
      </svg>
      <div class="dialog">
        <h2>钢筋显示控制面板</h2>
        <div class="dialog-body">
          <fieldset>
            <label><input type="checkbox" checked>上部通长筋</label>
            <label><input type="checkbox" checked>支座负筋</label>
            <label><input type="checkbox" checked>下部通长筋</label>
            <label><input type="checkbox" checked>箍筋</label>
            <label><input type="checkbox" checked>显示其它图元</label>
            <label><input type="checkbox" checked>显示详细公式</label>
          </fieldset>
        </div>
      </div>
    </div>
    <div class="hsplit"><i></i></div>
    <section class="editor">
      <div class="strip"></div>
      <h2>编辑钢筋</h2>
      <div class="editor-box">
        <div class="etools">
          <button class="nav">|&lt;</button><button class="nav">&lt;</button><button class="nav">&gt;</button><button class="nav">&gt;|</button>
          <button class="ic" aria-label="上移"><svg><use href="#i-up"/></svg></button>
          <button class="ic" aria-label="下移"><svg><use href="#i-down"/></svg></button>
          <button><svg><use href="#i-insert"/></svg>插入</button>
          <button><svg><use href="#i-delpage"/></svg>删除</button>
          <button disabled><svg><use href="#i-ruler"/></svg>缩尺配筋</button>
          <button><svg><use href="#i-info"/></svg>钢筋信息</button>
          <button><svg><use href="#i-lib"/></svg>钢筋图库</button>
          <button><svg><use href="#i-other"/></svg>其他<i class="caret"></i></button>
          <span>单构件钢筋总重(kg)：107.234</span>
        </div>
        <div class="grid">
          <table>
            <colgroup><col class="c0"><col class="c1"><col class="c2"><col class="c3"><col class="c4"><col class="c5"><col class="c6"><col class="c7"><col class="c8"><col class="c9"><col class="c10"><col class="c11"><col class="c12"></colgroup>
            <thead><tr><th></th><th>筋号</th><th>直径(mm)</th><th>级别</th><th>图号</th><th class="cur">图形</th><th>计算公式</th><th>公式描述</th><th>长度</th><th>根数</th><th>搭接</th><th>损耗(%)</th><th>单重(kg)</th></tr></thead>
            <tbody>
              <tr><th>1</th><td class="zh">1跨. 上通长筋1</td><td>16</td><td><svg class="bar"><use href="#i-rebar"/></svg></td><td>64</td>
                <td class="fig"><svg viewBox="0 0 216 45"><path d="M40 15v16h150V15" fill="none" stroke="#000" stroke-width="2"/><text x="15" y="27">240</text><text x="101" y="27" class="red">6550</text><text x="193" y="28">192</text></svg></td>
                <td>400-20+15*d+6190+192-20</td><td class="zh">支座宽-保护层+弯折+净长+弯折-保护层</td><td>6982</td><td>2</td><td>0</td><td>0</td><td>11.032</td></tr>
              <tr><th>2</th><td class="zh">1跨. 左支座筋1</td><td>16</td><td><svg class="bar"><use href="#i-rebar"/></svg></td><td>18</td>
                <td class="fig"><svg viewBox="0 0 216 45"><path d="M43 15v17h168" fill="none" stroke="#000" stroke-width="2"/><text x="15" y="30">240</text><text x="106" y="25" class="red">1668</text></svg></td>
                <td>400-20+15*d+5150/4</td><td class="zh">支座宽-保护层+弯折+搭接</td><td>1908</td><td>2</td><td>0</td><td>0</td><td>3.015</td></tr>
              <tr><th class="cur">3</th><td class="zh">1跨. 右支座筋1</td><td>16</td><td><svg class="bar"><use href="#i-rebar"/></svg></td><td>145</td>
                <td class="fig cursor"><svg viewBox="0 0 216 45"><path d="M74 31h54M119 31l14-14h38" fill="none" stroke="#000" stroke-width="2"/><path d="M68.500 6v11M66 17.500h6M66 31.500h6M68.500 32v12" stroke="#000"/><path d="M66 11h5l-2.500 5zM66 37h5l-2.500-5z"/><g class="small"><text x="55" y="27">440</text><text x="98" y="28">160</text><text x="128" y="35">45</text><text x="145" y="14">2098</text></g></svg></td>
                <td>5150/4+200+0.75*840+<br>(500-20*3)*1.414+160</td><td class="zh">搭接+支座宽+净长</td><td>2900</td><td>2</td><td>0</td><td>0</td><td>4.582</td></tr>
              <tr><th>4</th><td class="zh">1跨. 下通长筋1</td><td>16</td><td><svg class="bar"><use href="#i-rebar"/></svg></td><td>18</td>
                <td class="fig"><svg viewBox="0 0 216 45"><path d="M43 15v17h168" fill="none" stroke="#000" stroke-width="2"/><text x="15" y="30">240</text><text x="106" y="25" class="red">6550</text></svg></td>
                <td>400-20+15*d+6190-20</td><td class="zh">支座宽-保护层+弯折+净长-保护层</td><td>6790</td><td>2</td><td>0</td><td>0</td><td>10.728</td></tr>
            </tbody>
          </table>
        </div>
        <div class="hscroll"><i></i></div>
      </div>
    </section>
  </section>
</main>
</body>
</html>
```

FILE: styles.css
```css
* { box-sizing: border-box; }
html, body { height: 100%; }
body {
  margin: 0; display: flex; flex-direction: column; overflow: hidden;
  font: 12px/18px "Noto Sans", "Noto Sans CJK SC", sans-serif; color: #111; background: #fff;
}
button { font: inherit; color: inherit; border: 0; background: none; padding: 0; margin: 0; white-space: nowrap; }
h2 { font: inherit; margin: 0; }
svg { flex: none; }
.sprite { position: absolute; width: 0; height: 0; }
.caret { display: inline-block; flex: none; border: 3px solid transparent; border-top: 4px solid #555; border-bottom: 0; }
.caret.big { border-width: 4px 4px 0; }
.caret.pale { border-top-color: #aaa; }

.titlebar { flex: none; height: 11px; display: flex; align-items: flex-end; overflow: hidden; }
.quick { display: flex; align-items: center; height: 20px; padding-left: 4px; flex: none; }
.qb { width: 23px; height: 18px; display: flex; justify-content: center; align-items: center; }
.qb svg { width: 16px; height: 16px; }
.qb.on { background: #cfe3fa; border: 1px solid #7fb2ee; }
.qd { width: 8px; display: flex; justify-content: center; }
.quick .qd:last-child { width: 16px; }
.title { margin-left: 150px; line-height: 20px; height: 20px; white-space: nowrap; }

.tabs { flex: none; display: flex; padding: 1px 0 0 2px; height: 20px; border-bottom: 1px solid #d4d6d8; }
.tabs button { padding: 1px 13px 0; color: #333; line-height: 17px; }
.tabs .active { background: #55a3fa; color: #fff; border-radius: 3px 3px 0 0; }

.ribbon { flex: none; display: flex; height: 98px; padding-top: 2px; overflow: hidden; border-bottom: 2px solid #898d93; background: linear-gradient(#fff, #fbfcfc 50%, #e6eaea); }
.group { flex: none; display: flex; flex-direction: column; padding: 0 13px 0 9px; margin-bottom: 2px; border-right: 1px solid #c6c9cc; }
.group.first { padding-left: 5px; }
.group.cad { padding-right: 15px; }
.group.common { padding-right: 14px; }
.group.draw { padding-right: 11px; }
.group.recog { padding: 0 14px 0 8px; }
.group.last { min-width: 502px; padding-left: 6px; }
.cols { display: flex; gap: 11px; }
.draw .cols { gap: 9px; }
.recog .tall { margin-right: -1px; }
.last .tall { margin-right: -5px; }
.col { display: flex; flex-direction: column; padding-top: 1px; }
.col button { display: flex; align-items: center; height: 23px; gap: 3px; }
.col svg { width: 16px; height: 16px; }
.col .caret { margin: 0 -2px 0 2px; }
.ribbon button:disabled { color: #aaa; }
.tall { display: flex; flex-direction: column; align-items: center; min-width: 32px; padding-top: 5px; height: 70px; }
.tall svg { width: 30px; height: 30px; margin-bottom: 4px; }
.tall .caret { margin-top: 4px; }
.glabel { display: flex; align-items: center; justify-content: center; gap: 6px; height: 24px; padding-top: 3px; }
.first .glabel { justify-content: flex-start; }

.selectors { flex: none; display: flex; gap: 4px; height: 27px; padding: 2px 0 3px; background: #c9cbcf; border-bottom: 2px solid #9b9ea3; }
.combo { display: flex; align-items: center; width: 98px; background: #fff; border: 1px solid #a4a5a8; padding: 1px 4px 0; }
.combo.cut { width: 53px; border-left: 0; }
.combo select { appearance: none; flex: 1; min-width: 0; border: 0; padding: 0; background: none; font: inherit; color: #111; outline: 0; }

.work { flex: 1; min-height: 0; display: flex; }
.strip { height: 12px; background: #d3d4d9; border-bottom: 1px solid #bfc0c4; display: flex; justify-content: flex-end; align-items: center; }
.strip button { color: #666; font-size: 14px; line-height: 10px; padding-right: 4px; }
.side { flex: none; width: 228px; display: flex; flex-direction: column; border-right: 1px solid #bfc0c4; overflow: hidden; }
.side-title { height: 22px; line-height: 22px; background: #efefef; border-bottom: 1px solid #c8c8c8; color: #777; text-indent: -3px; }
.side-tools { display: flex; align-items: center; height: 31px; padding-top: 1px; background: #efefef; border-bottom: 1px solid #c8c8c8; gap: 11px; color: #333; }
.side-tools button { display: flex; align-items: center; gap: 3px; }
.side-tools svg { width: 16px; height: 16px; }
.side-tools .newbtn { width: 11px; gap: 4px; }
.newbtn b { width: 1px; height: 10px; background: #4a90dd; }
.side-tools .more { margin-left: auto; padding-right: 2px; gap: 1px; }
.more i { border: 3px solid transparent; border-left: 4px solid #222; border-right: 0; }
.search { display: flex; align-items: center; height: 19px; border-bottom: 1px solid #c8c8c8; padding-right: 4px; }
.search input { flex: 1; min-width: 0; border: 0; padding: 0; font: inherit; outline: 0; text-indent: -8px; }
.search input::placeholder { color: #666; }
.search svg { width: 16px; height: 16px; }
.tree { list-style: none; margin: 0; padding: 26px 0 0 13px; }
.tree li { height: 24px; display: flex; align-items: center; }
.tree li span { padding: 1px 12px 1px 3px; line-height: 19px; }
.tree .sel { background: #b3ccee; }
.tree .cutword { margin-left: -17px; padding-top: 2px; }

.vsplit { flex: none; width: 4px; padding-top: 230px; }
.vsplit i { display: block; height: 100px; background: #5f6b78; }
.right { flex: 1; min-width: 0; display: flex; flex-direction: column; }
.viewport { flex: 1; min-height: 0; position: relative; overflow: hidden; background: #2c2c2c; }
.scene { display: block; width: 100%; height: 100%; }
.note text { font: 33px "DejaVu Sans", sans-serif; fill: #cfcfcf; }
.note .wide { font-size: 34px; }
.dim text { font: 18px "Noto Sans CJK SC", sans-serif; fill: #008000; }
.axis text { font: 16px "Noto Sans CJK SC", sans-serif; }
.dialog { position: absolute; left: 2px; top: 2px; width: 135px; background: #efefef; border: 1px solid #c0c6d0; box-shadow: 2px 2px 3px rgba(0,0,0,.6); }
.dialog h2 { margin: -1px -1px 0; height: 27px; line-height: 27px; padding-left: 8px; background: #2b7de1; color: #fff; }
.dialog-body { padding: 20px 11px 11px; }
.dialog fieldset { margin: 0; border: 1px solid #aaa; border-radius: 3px; background: #fff; padding: 6px 0 6px 10px; min-width: 0; }
.dialog label { display: flex; align-items: center; gap: 3px; height: 23px; white-space: nowrap; }
.dialog input { appearance: none; margin: 0; width: 14px; height: 14px; border-radius: 2px; background: #55a3fa; display: grid; place-items: center; }
.dialog input:checked::before { content: ""; width: 8px; height: 5px; border: solid #fff; border-width: 0 0 2px 2px; transform: rotate(-45deg); margin-bottom: 3px; }

.hsplit { flex: none; height: 4px; display: flex; justify-content: center; padding-left: 448px; }
.hsplit i { width: 100px; background: #5f6b78; display: flex; justify-content: center; }
.hsplit i::after { content: ""; height: 0; border: 3px solid transparent; border-top-color: #c9cdd2; border-bottom: 0; }
.editor { flex: none; height: 274px; display: flex; flex-direction: column; background: #efefef; border-top: 1px solid #bfc0c4; border-left: 1px solid #c8c8c8; }
.editor h2 { height: 22px; line-height: 20px; padding-left: 8px; color: #777; border-bottom: 1px solid #bfc0c4; }
.editor-box { flex: 1; min-height: 0; display: flex; flex-direction: column; margin: 8px 0 2px 8px; border: 1px solid #c4c4c4; border-right: 0; }
.etools { flex: none; display: flex; align-items: center; height: 29px; padding-left: 3px; gap: 10px; color: #222; }
.etools button { display: flex; align-items: center; gap: 3px; }
.etools button:disabled { color: #aaa; }
.etools svg { width: 16px; height: 16px; }
.etools .nav { width: 11px; justify-content: center; }
.etools .ic { width: 16px; }
.etools .caret { margin-left: 2px; }
.grid { flex: 1; min-height: 0; overflow: hidden; background: #fff; }
table { table-layout: fixed; width: 1209px; border-collapse: collapse; }
.c0 { width: 13px; } .c1 { width: 73px; } .c2 { width: 56px; } .c3 { width: 36px; } .c4 { width: 33px; } .c5 { width: 216px; } .c6 { width: 166px; } .c7 { width: 158px; } .c8 { width: 38px; } .c9 { width: 238px; } .c10 { width: 49px; } .c11 { width: 61px; } .c12 { width: 72px; }
th { background: #efefef; border: 1px solid #c4c4c4; font-weight: 400; color: #333; padding: 0; }
thead th { height: 21px; line-height: 18px; white-space: nowrap; }
th:first-child { border-left: 0; }
th.cur { background: #80bbfa; color: #fff; font-weight: 700; border-color: #6aa8ec; }
tbody tr { height: 46px; }
td { background: #ccffd9; border: 1px solid #d0d4d0; padding: 0 2px 2px; font-size: 11px; line-height: 14px; color: #000; }
td.zh { font-size: 12px; padding: 0 2px 2px 3px; }
td.fig { padding: 0; }
td.fig svg { display: block; width: 215px; height: 45px; }
td.cursor { outline: 2px solid #808080; outline-offset: -1px; }
td .bar { width: 10px; height: 10px; margin: 2px 0 0 3px; display: block; }
.fig text { font: 14px "Liberation Serif", serif; }
.fig .red { fill: #f00; }
.fig .small text { font: 9px "Noto Sans", sans-serif; }
.hscroll { flex: none; height: 14px; background: #fff; padding: 3px 0 3px 14px; }
.hscroll i { display: block; height: 8px; background: #c9c9c9; border-radius: 4px 0 0 4px; }
```
